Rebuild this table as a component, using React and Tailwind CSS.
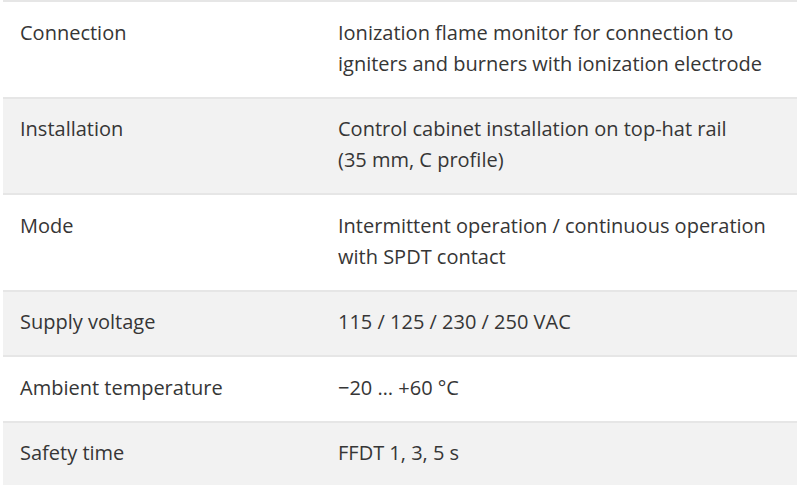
const rows = [
  ["Connection", ["Ionization flame monitor for connection to", "igniters and burners with ionization electrode"]],
  ["Installation", ["Control cabinet installation on top-hat rail", "(35 mm, C profile)"]],
  ["Mode", ["Intermittent operation / continuous operation", "with SPDT contact"]],
  ["Supply voltage", ["115 / 125 / 230 / 250 VAC"]],
  ["Ambient temperature", ["\u221220 \u2026 +60 \u00b0C"]],
  ["Safety time", ["FFDT 1, 3, 5 s"]],
];

export default function App() {
  return (
    <div className="w-[800px] h-[485px] overflow-hidden bg-white px-[3px] font-['Open_Sans',sans-serif] text-[20px] leading-[31px] text-[#363636]">
      <div className="flex flex-col border-t-2 border-[#e6e6e6]">
        {rows.map(([label, value], i) => (
          <div
            key={label}
            className={`flex border-b-2 border-[#e6e6e6] ${i % 2 === 1 ? "bg-[#f2f2f2]" : "bg-white"}`}
          >
            <div className="w-[318px] shrink-0 pl-[17px] pt-[14.5px] pb-[18px]">{label}</div>
            <div className="flex-1 pl-[17px] pt-[14.5px] pb-[18px]">
              {value.map((line) => (
                <div key={line}>{line}</div>
              ))}
            </div>
          </div>
        ))}
      </div>
    </div>
  );
}
